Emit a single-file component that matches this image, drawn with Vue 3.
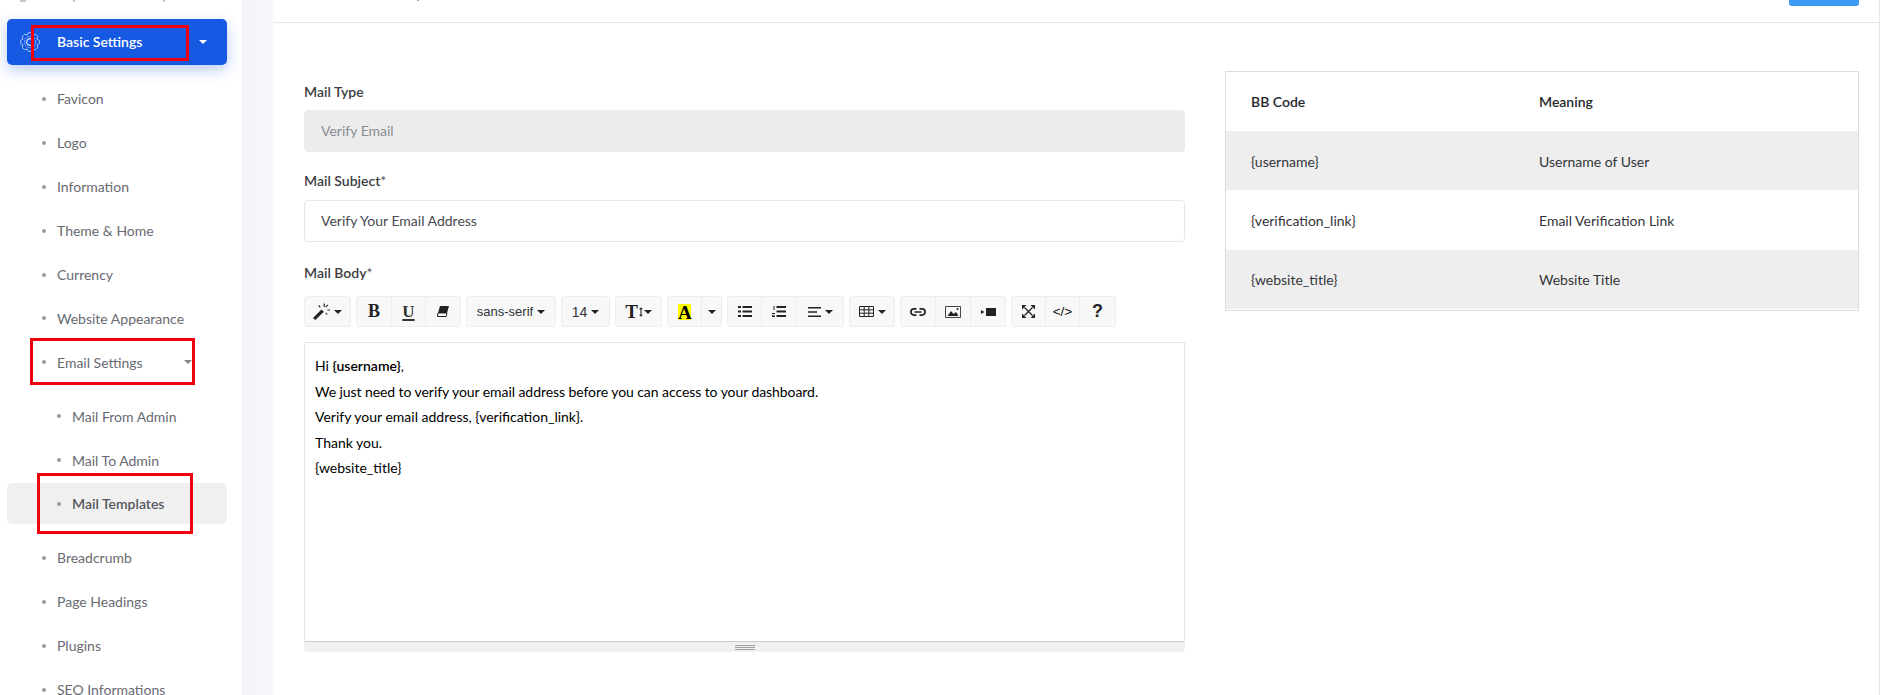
<script setup>
const mainItems = ['Favicon', 'Logo', 'Information', 'Theme & Home', 'Currency', 'Website Appearance']
const lowerItems = ['Breadcrumb', 'Page Headings', 'Plugins', 'SEO Informations']
const subItems = [
  { label: 'Mail From Admin' },
  { label: 'Mail To Admin' },
  { label: 'Mail Templates', active: true }
]
const codes = [
  ['{username}', 'Username of User'],
  ['{verification_link}', 'Email Verification Link'],
  ['{website_title}', 'Website Title']
]
const teeth = 8
const gearPath = Array.from({ length: teeth }, (_, t) => {
  const base = (t / teeth) * Math.PI * 2
  const step = (Math.PI * 2) / teeth
  return [
    [7.6, base - step * 0.5],
    [9.5, base - step * 0.22],
    [9.5, base + step * 0.22]
  ].map(([r, a]) => `${(10 + r * Math.cos(a)).toFixed(2)} ${(10 + r * Math.sin(a)).toFixed(2)}`).join(' L')
}).join(' L')
</script>

<template>
  <div class="page">
    <aside class="sidebar">
      <div class="sliver">
        <i class="m1"></i><i class="m2"></i><i class="m3"></i>
      </div>
      <div class="primary">
        <svg class="gear" viewBox="0 0 20 20" fill="none" stroke="#e6edff" stroke-width=".7" stroke-linejoin="round">
          <path :d="`M${gearPath} Z`" />
          <circle cx="10" cy="10" r="5.600" stroke-dasharray="1.500 1" />
          <path d="M12.600 7.800A3.400 3.400 0 1 0 12.600 12.200" stroke-width="1.100" />
        </svg>
        <span class="primary-label">Basic Settings</span>
        <span class="caret white"></span>
        <span class="redbox rb-top"></span>
      </div>
      <nav class="nav">
        <a v-for="item in mainItems" :key="item" class="item">{{ item }}</a>
        <a class="item email">
          Email Settings
          <span class="caret gray"></span>
          <span class="redbox rb-email"></span>
        </a>
        <div class="sub">
          <a v-for="s in subItems" :key="s.label" class="item subitem" :class="{ active: s.active }">
            {{ s.label }}
            <span v-if="s.active" class="redbox rb-tpl"></span>
          </a>
        </div>
        <a v-for="item in lowerItems" :key="item" class="item">{{ item }}</a>
      </nav>
    </aside>

    <div class="gutter"></div>

    <main class="main">
      <header class="topbar">
        <i class="crumb-mark"></i>
        <span class="save"></span>
      </header>
      <section class="content">
        <form class="form" @submit.prevent>
          <label class="lbl first">Mail Type</label>
          <div class="field disabled">Verify Email</div>
          <label class="lbl">Mail Subject<span class="star">*</span></label>
          <div class="field">Verify Your Email Address</div>
          <label class="lbl body-lbl">Mail Body<span class="star">*</span></label>

          <div class="toolbar">
            <div class="grp">
              <button class="btn w47">
                <svg width="17" height="17" viewBox="0 0 16 16" fill="#222">
                  <path d="M0 14 8 6l2.200 2.200L2.200 16z" />
                  <path d="M10 .5h1.100v3.200H10zM13.500 6h2.500v1.100h-2.500zM5 2.500l.9-.6 1.400 2-.9.6zM13.500 1.500l.8.7-2 2-.7-.7zM11.600 9.500l.7-.6 1.400 1.800-.7.6z" />
                </svg>
                <span class="caret dark"></span>
              </button>
            </div>
            <div class="grp">
              <button class="btn w36 serif b">B</button>
              <button class="btn w34 serif u">U</button>
              <button class="btn w35">
                <svg width="12" height="11" viewBox="0 0 12 11">
                  <path d="M3 0h9L10 7H1z" fill="#222" />
                  <path d="M1 7h9l-.8 3.500H.4z" fill="#fff" stroke="#222" />
                </svg>
              </button>
            </div>
            <div class="grp"><button class="btn w90 sans">sans-serif<span class="caret dark"></span></button></div>
            <div class="grp"><button class="btn w49 sans big">14<span class="caret dark"></span></button></div>
            <div class="grp">
              <button class="btn w47">
                <span class="serif tt">T</span>
                <svg width="4" height="12" viewBox="0 0 5 12" fill="#222"><path d="M2.500 0 5 2.500H3.200v7H5L2.500 12 0 9.500h1.800v-7H0z" /></svg>
                <span class="caret dark tight"></span>
              </button>
            </div>
            <div class="grp">
              <button class="btn w35"><span class="serif hl">A</span></button>
              <button class="btn w20"><span class="caret dark nomargin"></span></button>
            </div>
            <div class="grp">
              <button class="btn w35">
                <svg width="14" height="11" viewBox="0 0 14 11" fill="#222">
                  <path d="M0 0h3v2H0zM0 4.500h3v2H0zM0 9h3v2H0zM4.500 0H14v2H4.500zM4.500 4.500H14v2H4.500zM4.500 9H14v2H4.500z" />
                </svg>
              </button>
              <button class="btn w35">
                <svg width="14" height="11" viewBox="0 0 14 11" fill="#222">
                  <path d="M1.500 0h1v4h-1zM0 7h3v1H1v1.500h2V11H0V9l2-1H0zM4.500 0H14v2H4.500zM4.500 4.500H14v2H4.500zM4.500 9H14v2H4.500z" />
                </svg>
              </button>
              <button class="btn w47">
                <svg width="13" height="10" viewBox="0 0 13 10" fill="#222"><path d="M0 0h13v1.600H0zM0 4.200h9v1.600H0zM0 8.400h13V10H0z" /></svg>
                <span class="caret dark"></span>
              </button>
            </div>
            <div class="grp">
              <button class="btn w46">
                <svg width="15" height="11" viewBox="0 0 15 11" fill="none" stroke="#222" stroke-width="1">
                  <path d="M.5.500h14v10H.5zM.5 3.800h14M.5 7.200h14M5.200.500v10M9.800.500v10" />
                </svg>
                <span class="caret dark"></span>
              </button>
            </div>
            <div class="grp">
              <button class="btn w36">
                <svg width="16" height="8" viewBox="0 0 16 8" fill="none" stroke="#222" stroke-width="1.700">
                  <path d="M6.500.9H4a3.100 3.100 0 0 0 0 6.200h2.500M9.500.9H12a3.100 3.100 0 0 1 0 6.200H9.500M4.500 4h7" />
                </svg>
              </button>
              <button class="btn w35">
                <svg width="16" height="12" viewBox="0 0 16 12">
                  <path d="M.5.500h15v11H.5z" fill="none" stroke="#444" />
                  <path d="M2.500 10 6 5l2.500 3L11 6l2.500 4z" fill="#222" />
                  <circle cx="12.500" cy="3" r="1" fill="#222" />
                </svg>
              </button>
              <button class="btn w35">
                <svg width="15" height="8" viewBox="0 0 15 8" fill="#222"><path d="M5 0h10v8H5zM0 2l3.500 2L0 6z" /></svg>
              </button>
            </div>
            <div class="grp">
              <button class="btn w35">
                <svg width="13" height="13" viewBox="0 0 13 13">
                  <path d="M2.500 2.500l8 8M10.500 2.500l-8 8" stroke="#222" stroke-width="1.300" fill="none" />
                  <path d="M0 0h4.500L0 4.500zM13 0v4.500L8.500 0zM0 13V8.500L4.500 13zM13 13H8.500L13 8.500z" fill="#222" />
                </svg>
              </button>
              <button class="btn w34 code">&lt;/&gt;</button>
              <button class="btn w36 help">?</button>
            </div>
          </div>

          <div class="editor">
            <p>Hi <b>{username}</b>,</p>
            <p class="narrow">We just need to verify your email address before you can access to your dashboard.</p>
            <p>Verify your email address, {verification_link}.</p>
            <p>Thank you.</p>
            <p>{website_title}</p>
          </div>
          <div class="statusbar"><span class="grip"></span></div>
        </form>

        <div class="codes">
          <div class="row head">
            <span>BB Code</span><span>Meaning</span>
          </div>
          <div v-for="(c, i) in codes" :key="c[0]" class="row" :class="{ striped: i !== 1 }">
            <span>{{ c[0] }}</span><span>{{ c[1] }}</span>
          </div>
        </div>
      </section>
    </main>
  </div>
</template>

<style>
html, body { margin: 0; background: #fff; overflow: hidden; }
</style>

<style scoped>
.page {
  display: flex;
  width: 1880px;
  height: 695px;
  overflow: hidden;
  font-family: Lato, "Liberation Sans", sans-serif;
  font-size: 14px;
}
.sidebar { width: 242px; flex: none; background: #fff; }
.sliver { height: 2px; display: flex; overflow: hidden; }
.sliver i { display: block; height: 2px; background: #c4c5ca; }
.m1 { width: 6px; margin-left: 20px; }
.m2 { width: 2px; margin-left: 47px; }
.m3 { width: 2px; margin-left: 88px; }
.primary {
  position: relative;
  display: flex;
  align-items: center;
  box-sizing: border-box;
  width: 220px;
  height: 46px;
  margin: 17px 0 0 7px;
  padding: 0 20px 0 13px;
  background: #1659e3;
  border-radius: 5px;
  box-shadow: 0 5px 14px rgba(22, 89, 227, .3);
  color: #fff;
}
.gear { width: 20px; height: 20px; flex: none; }
.primary-label { margin-left: 17px; padding-bottom: 1px; font-weight: 600; flex: 1; }
.caret {
  display: inline-block;
  width: 0;
  height: 0;
  border-style: solid;
  border-color: currentColor transparent transparent;
  border-width: 4px 4px 0;
}
.caret.white { color: #fff; }
.caret.gray { color: #85868e; position: absolute; left: 184px; top: 20px; }
.caret.dark { color: #222; margin-left: 4px; border-width: 4px 4px 0; }
.caret.dark.tight { margin-left: 1px; }
.caret.dark.nomargin { margin-left: 0; }
.nav { padding-top: 12px; }
.item {
  position: relative;
  display: flex;
  align-items: center;
  height: 43.900px;
  padding-left: 57px;
  color: #686a72;
}
.item::before {
  content: "";
  position: absolute;
  left: 42px;
  top: 20px;
  width: 4px;
  height: 4px;
  border-radius: 50%;
  background: #9a9ba2;
}
.sub { padding: 10px 0; }
.subitem { padding-left: 72px; }
.subitem::before { left: 57px; }
.subitem.active { color: #55575e; font-weight: 600; isolation: isolate; }
.subitem.active::after {
  content: "";
  position: absolute;
  z-index: -1;
  left: 7px;
  top: 1px;
  width: 220px;
  height: 41px;
  border-radius: 5px;
  background: #f0f0f0;
}
.redbox {
  position: absolute;
  box-sizing: border-box;
  border: 3px solid #f0000f;
  pointer-events: none;
}
.rb-top { left: 24px; top: 6px; width: 158px; height: 36px; }
.rb-email { left: 30px; top: -2px; width: 165px; height: 47px; }
.rb-tpl { left: 37px; top: -9px; width: 156px; height: 61px; }

.gutter { width: 32px; flex: none; background: linear-gradient(90deg, #f1f3f9, #f8f9fc); }
.main { width: 1605px; flex: none; border-right: 1px solid #e6e6e8; }
.topbar {
  position: relative;
  height: 22px;
  display: flex;
  justify-content: flex-end;
  align-items: flex-start;
  padding-right: 20px;
  border-bottom: 1px solid #e3e3e6;
}
.crumb-mark { position: absolute; left: 143px; top: 0; width: 2px; height: 1px; background: #aaa; }
.save { width: 70px; height: 6px; background: #3c9bf5; border-radius: 0 0 3px 3px; }
.content { display: flex; gap: 40px; padding: 48px 20px 0 30px; }
.form { width: 881px; flex: none; }
.lbl {
  display: block;
  margin: 18px 0 9px;
  font-weight: 600;
  line-height: 21px;
  color: #3c3e44;
}
.lbl.first { margin-top: 10px; margin-bottom: 8px; }
.lbl.body-lbl { margin-top: 20px; margin-bottom: 13px; }
.star { font-weight: 400; color: #55575e; }
.field {
  box-sizing: border-box;
  height: 42px;
  padding: 0 16px;
  line-height: 40px;
  border: 1px solid #e7e8ee;
  border-radius: 4px;
  color: #484a51;
}
.field.disabled { background: #ececec; border-color: #ececec; color: #8a8c91; }

.toolbar { display: flex; gap: 5px; height: 31px; }
.grp { display: flex; }
.btn {
  display: flex;
  align-items: center;
  justify-content: center;
  box-sizing: border-box;
  height: 31px;
  margin: 0;
  padding: 0;
  background: #f8f8f8;
  border: 1px solid #eeeeee;
  border-left-width: 0;
  color: #222;
}
.btn:first-child { border-left-width: 1px; border-radius: 3px 0 0 3px; }
.btn:last-child { border-radius: 0 3px 3px 0; }
.btn:only-child { border-radius: 3px; }
.w20 { width: 20px; }
.w34 { width: 34px; }
.w35 { width: 35px; }
.w36 { width: 36px; }
.w46 { width: 46px; }
.w47 { width: 47px; }
.w49 { width: 49px; }
.w90 { width: 90px; }
.serif { font-family: "Liberation Serif", serif; font-weight: 700; }
.b { font-size: 18px; }
.u { font-size: 17px; text-decoration: underline 2px; text-underline-offset: 2px; color: #333; }
.sans { font-family: "Liberation Sans", sans-serif; font-size: 13px; color: #333; }
.sans.big { font-size: 14px; }
.tt { font-size: 19px; line-height: 1; margin-right: 1px; }
.hl { display: block; width: 13px; height: 16px; font-size: 19px; line-height: 17px; background: #ff0; color: #000; text-align: center; }
.code { font-family: "Liberation Sans", sans-serif; font-size: 13.500px; color: #111; }
.help { font-family: "Liberation Sans", sans-serif; font-size: 18px; font-weight: 700; }

.editor {
  box-sizing: border-box;
  height: 300px;
  margin-top: 15px;
  padding: 10px;
  border: 1px solid #e7e7ea;
  border-bottom-color: #ccc;
  color: #000;
  line-height: 25.500px;
}
.editor p { margin: 0; }
.editor b { font-weight: 600; }
.editor .narrow { letter-spacing: -.07px; }
.statusbar {
  display: flex;
  justify-content: center;
  padding-top: 3px;
  box-sizing: border-box;
  height: 10px;
  background: #f0f0f0;
  border-radius: 0 0 4px 4px;
}
.grip {
  display: block;
  box-sizing: border-box;
  width: 20px;
  height: 5px;
  border-top: 1px solid #a0a0a0;
  border-bottom: 1px solid #a0a0a0;
  background: linear-gradient(#f0f0f0 0 1px, #a0a0a0 1px 2px, #f0f0f0 2px);
}

.codes {
  box-sizing: border-box;
  width: 634px;
  height: 240px;
  border: 1px solid #dcdce0;
  color: #33353a;
}
.row {
  display: grid;
  grid-template-columns: 288px 1fr;
  align-items: center;
  box-sizing: border-box;
  height: 59.330px;
  padding: 1px 25px 0;
}
.row.head { height: 59px; padding-top: 0; font-weight: 600; color: #26272b; }
.row.striped { background: #eeeeee; }
</style>
